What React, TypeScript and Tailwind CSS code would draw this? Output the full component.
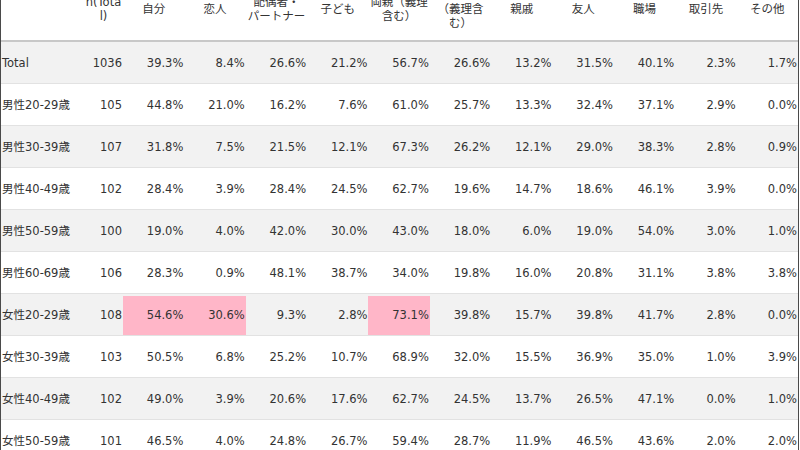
import React from 'react';

type Row = { label: string; n: string; values: string[]; hot?: number[] };

const headers: React.ReactNode[] = [
  '自分',
  '恋人',
  <>配偶者・<br />パートナー</>,
  '子ども',
  <>両親（義理<br />含む）</>,
  <>兄弟姉妹<br />（義理含<br />む）</>,
  '親戚',
  '友人',
  '職場',
  '取引先',
  'その他',
];

const rows: Row[] = [
  { label: 'Total', n: '1036', values: ['39.3', '8.4', '26.6', '21.2', '56.7', '26.6', '13.2', '31.5', '40.1', '2.3', '1.7'] },
  { label: '男性20-29歳', n: '105', values: ['44.8', '21.0', '16.2', '7.6', '61.0', '25.7', '13.3', '32.4', '37.1', '2.9', '0.0'] },
  { label: '男性30-39歳', n: '107', values: ['31.8', '7.5', '21.5', '12.1', '67.3', '26.2', '12.1', '29.0', '38.3', '2.8', '0.9'] },
  { label: '男性40-49歳', n: '102', values: ['28.4', '3.9', '28.4', '24.5', '62.7', '19.6', '14.7', '18.6', '46.1', '3.9', '0.0'] },
  { label: '男性50-59歳', n: '100', values: ['19.0', '4.0', '42.0', '30.0', '43.0', '18.0', '6.0', '19.0', '54.0', '3.0', '1.0'] },
  { label: '男性60-69歳', n: '106', values: ['28.3', '0.9', '48.1', '38.7', '34.0', '19.8', '16.0', '20.8', '31.1', '3.8', '3.8'] },
  { label: '女性20-29歳', n: '108', values: ['54.6', '30.6', '9.3', '2.8', '73.1', '39.8', '15.7', '39.8', '41.7', '2.8', '0.0'], hot: [0, 1, 4] },
  { label: '女性30-39歳', n: '103', values: ['50.5', '6.8', '25.2', '10.7', '68.9', '32.0', '15.5', '36.9', '35.0', '1.0', '3.9'] },
  { label: '女性40-49歳', n: '102', values: ['49.0', '3.9', '20.6', '17.6', '62.7', '24.5', '13.7', '26.5', '47.1', '0.0', '1.0'] },
  { label: '女性50-59歳', n: '101', values: ['46.5', '4.0', '24.8', '26.7', '59.4', '28.7', '11.9', '46.5', '43.6', '2.0', '2.0'] },
];

const grid = 'grid grid-cols-[83px_39px_repeat(11,minmax(0,1fr))]';

export default function App() {
  return (
    <div
      className="w-[800px] h-[450px] overflow-hidden bg-white text-[#333] text-[11.5px]"
      style={{ fontFamily: '"DejaVu Sans", "Noto Sans CJK JP", sans-serif' }}
    >
      <div className="w-[799px] -mt-[20px] border-x border-[#4a4a4a]">
        {/* Header */}
        <div className={`${grid} h-[62px] pb-[2px] border-b-2 border-[#c8c8c8] leading-[14px]`}>
          <div />
          <div className="flex items-center justify-center text-center whitespace-nowrap">
            n(Tota<br />l)
          </div>
          {headers.map((h, i) => (
            <div key={i} className="flex items-center justify-center text-center whitespace-nowrap">
              <span>{h}</span>
            </div>
          ))}
        </div>

        {/* Body */}
        {rows.map((r, ri) => (
          <div
            key={r.label}
            className={`${grid} h-[42px] pt-[2px] border-b border-[#e2e2e2] ${ri % 2 === 0 ? 'bg-[#f2f2f2]' : 'bg-white'}`}
          >
            <div className="flex items-center pl-[1px] whitespace-nowrap">{r.label}</div>
            <div className="flex items-center justify-end pr-[1px]">{r.n}</div>
            {r.values.map((v, vi) => (
              <div
                key={vi}
                className={`flex items-center justify-end pr-[1px] ${r.hot?.includes(vi) ? 'bg-[#ffb6c8]' : ''}`}
              >
                {v}%
              </div>
            ))}
          </div>
        ))}
      </div>
    </div>
  );
}
